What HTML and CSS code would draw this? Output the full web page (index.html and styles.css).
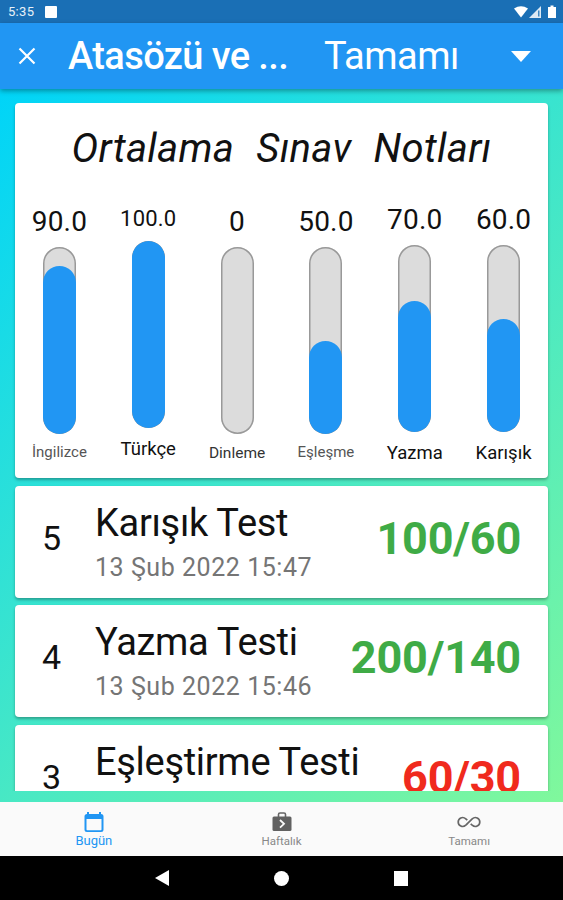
FILE: index.html
```html
<!DOCTYPE html>
<html lang="tr">
<head>
  <meta charset="UTF-8" />
  <title>Ortalama Sınav Notları</title>
  <meta name="viewport" content="width=device-width, initial-scale=1.0"/>
  <link rel="stylesheet" href="styles.css">
</head>
<body>

<div class="status-bar">
  <span class="clock">5:35</span>
  <span class="status-square"></span>
  <svg class="status-icons" width="44" height="14" viewBox="0 0 44 14" fill="#fff">
    <path d="M1 3.5Q8 -1 15 3.5L8 12.5Z"/>
    <path d="M28 1V13H16Z" fill-opacity=".85"/>
    <path d="M25.2 5.5h1.2v6h-1.2z" fill="#1a6fb5"/>
    <path d="M35 2h2.500V.5h3V2h2.500v11h-8z"/>
  </svg>
</div>

<header class="app-bar">
  <svg class="close" width="18" height="18" viewBox="0 0 18 18">
    <path d="M1.5 1.5L16.5 16.5M16.5 1.5L1.5 16.5" stroke="#fff" stroke-width="2.2"/>
  </svg>
  <h1>Atasözü ve ...</h1>
  <div class="dropdown">
    <span>Tamamı</span>
    <svg width="20" height="11" viewBox="0 0 20 11"><path d="M0 0H20L10 11Z" fill="#fff"/></svg>
  </div>
</header>

<main class="content">
  <div class="list">
    <section class="card chart-card">
      <h2>Ortalama Sınav Notları</h2>
      <div class="chart">
        <div class="col">
          <span class="value">90.0</span>
          <div class="track"><div class="fill" style="height:90%"></div></div>
          <span class="label label-xs">İngilizce</span>
        </div>
        <div class="col">
          <span class="value value-sm">100.0</span>
          <div class="track"><div class="fill" style="height:100%"></div></div>
          <span class="label">Türkçe</span>
        </div>
        <div class="col">
          <span class="value">0</span>
          <div class="track"></div>
          <span class="label label-sm">Dinleme</span>
        </div>
        <div class="col">
          <span class="value">50.0</span>
          <div class="track"><div class="fill" style="height:50%"></div></div>
          <span class="label label-xs">Eşleşme</span>
        </div>
        <div class="col">
          <span class="value">70.0</span>
          <div class="track"><div class="fill" style="height:70%"></div></div>
          <span class="label">Yazma</span>
        </div>
        <div class="col">
          <span class="value">60.0</span>
          <div class="track"><div class="fill" style="height:60%"></div></div>
          <span class="label">Karışık</span>
        </div>
      </div>
    </section>

    <section class="card test">
      <span class="number">5</span>
      <div class="info">
        <h3>Karışık Test</h3>
        <p>13 Şub 2022 15:47</p>
      </div>
      <span class="score">100/60</span>
    </section>

    <section class="card test">
      <span class="number">4</span>
      <div class="info">
        <h3>Yazma Testi</h3>
        <p>13 Şub 2022 15:46</p>
      </div>
      <span class="score">200/140</span>
    </section>

    <section class="card test">
      <span class="number">3</span>
      <div class="info">
        <h3>Eşleştirme Testi</h3>
      </div>
      <span class="score fail">60/30</span>
    </section>
  </div>
</main>

<nav class="tabs">
  <a class="tab active">
    <svg width="20" height="22" viewBox="0 0 20 22">
      <path d="M3 1h2v2h10V1h2v2q2.500 0 2.500 2.500v13q0 2.500-2.500 2.500H3q-2.500 0-2.500-2.500v-13Q.5 3 3 3ZM2.500 8v10.500q0 .7.700.7h13.600q.7 0 .7-.7V8Z" fill="#2196f3" fill-rule="evenodd"/>
    </svg>
    <span>Bugün</span>
  </a>
  <a class="tab">
    <svg width="20" height="22" viewBox="0 0 20 22">
      <path d="M6.500 6V3.500q0-1.500 1.500-1.500h4q1.500 0 1.500 1.500V6" fill="none" stroke="#666" stroke-width="1.600"/>
      <rect x=".5" y="5.500" width="19" height="14.500" rx="1.500" fill="#616161"/>
      <path d="M8 9l4 3.800L8 16.600" fill="none" stroke="#fafafa" stroke-width="1.800"/>
    </svg>
    <span>Haftalık</span>
  </a>
  <a class="tab">
    <svg width="24" height="22" viewBox="0 0 24 22">
      <path d="M10.300 12.800L8.800 14.200C5.600 17 1.200 14.800 1.200 11S5.600 5 8.800 7.800L10.300 9.200M13.700 12.800L15.200 14.200C18.400 17 22.800 14.800 22.800 11S18.400 5 15.200 7.800L8.800 14.200" fill="none" stroke="#666" stroke-width="1.700"/>
    </svg>
    <span>Tamamı</span>
  </a>
</nav>

<footer class="system-nav">
  <svg width="14" height="16" viewBox="0 0 14 16"><path d="M14 0V16L0 8Z" fill="#fff"/></svg>
  <span class="home"></span>
  <span class="recent"></span>
</footer>

</body>
</html>
```

FILE: styles.css
```css
* {
  margin: 0;
  padding: 0;
  box-sizing: border-box;
}

body {
  width: 563px;
  height: 900px;
  display: flex;
  flex-direction: column;
  overflow: hidden;
  font-family: Roboto, sans-serif;
  color: #111;
}

.status-bar {
  height: 23px;
  flex: none;
  display: flex;
  align-items: center;
  padding: 0 6px 0 8px;
  background: #1a6fb5;
  color: #e8f1f8;
}

.clock {
  font-size: 13px;
  letter-spacing: 0.3px;
}

.status-square {
  width: 12px;
  height: 12px;
  margin-left: 11px;
  background: #fff;
  border-radius: 1px;
}

.status-icons {
  margin-left: auto;
}

.app-bar {
  height: 66px;
  flex: none;
  display: flex;
  align-items: center;
  padding: 0 32px 0 18px;
  background: #2196f3;
  color: #fff;
  box-shadow: 0 2px 5px rgba(0, 0, 0, 0.35);
  z-index: 1;
}

.app-bar h1 {
  width: 256px;
  margin-left: 32px;
  font-size: 38px;
  font-weight: 500;
  letter-spacing: -0.6px;
  white-space: nowrap;
}

.dropdown {
  flex: 1;
  display: flex;
  align-items: center;
  justify-content: space-between;
  font-size: 38px;
  letter-spacing: -0.5px;
}

.content {
  height: 713px;
  flex: none;
  padding: 14px 15px 11px;
  background: linear-gradient(135deg, #00d4f8 0%, #80f89c 100%);
}

.list {
  height: 688px;
  margin: 0 -15px;
  padding: 0 15px;
  overflow: hidden;
}

.card {
  background: #fff;
  border-radius: 4px;
  margin-bottom: 7.7px;
  box-shadow: 0 2px 3px rgba(0, 0, 0, 0.3);
}

.chart-card {
  height: 375px;
  padding-top: 16px;
}

.chart-card h2 {
  height: 56px;
  line-height: 60px;
  text-align: center;
  font-size: 40px;
  font-style: italic;
  font-weight: 400;
  letter-spacing: 0.3px;
  word-spacing: 12px;
  white-space: nowrap;
}

.chart {
  height: 315px;
  display: grid;
  grid-template-columns: repeat(6, 1fr);
}

.col {
  display: flex;
  flex-direction: column;
  align-items: center;
  justify-content: center;
  gap: 9px;
}

.value {
  font-size: 28px;
  line-height: 33px;
  letter-spacing: 0.2px;
}

.value-sm {
  font-size: 22px;
  line-height: 26px;
}

.track {
  width: 33px;
  height: 187px;
  flex: none;
  display: flex;
  align-items: flex-end;
  background: #dcdcdc;
  border-radius: 17px;
  box-shadow: inset 0 0 0 1.5px #999;
  overflow: hidden;
}

.fill {
  width: 100%;
  background: #2196f3;
  border-radius: 17px;
}

.label {
  font-size: 18.5px;
  line-height: 24px;
  margin-bottom: -2px;
}

.label-sm {
  font-size: 15.5px;
  line-height: 20px;
  color: #333;
}

.label-xs {
  font-size: 15px;
  line-height: 19px;
  color: #555;
}

.test {
  height: 112px;
  display: flex;
  align-items: flex-start;
  padding: 0 27px;
}

.number {
  width: 53px;
  padding-top: 32px;
  font-size: 34px;
  line-height: 40px;
}

.info {
  padding-top: 15px;
}

.info h3 {
  font-size: 38px;
  line-height: 45px;
  font-weight: 400;
  letter-spacing: -0.3px;
}

.info p {
  margin-top: 7px;
  font-size: 25px;
  line-height: 30px;
  letter-spacing: 0.55px;
  color: #757575;
}

.score {
  margin-left: auto;
  padding-top: 25px;
  font-size: 45px;
  line-height: 56px;
  font-weight: 700;
  letter-spacing: -0.2px;
  color: #3fab46;
}

.score.fail {
  color: #f02a1d;
}

.tabs {
  height: 54px;
  flex: none;
  display: flex;
  background: #fafafa;
}

.tab {
  flex: 1;
  display: flex;
  flex-direction: column;
  align-items: center;
  padding-top: 9px;
  font-size: 11.5px;
  line-height: 17px;
  color: #888;
}

.tab.active {
  font-size: 13px;
  line-height: 15px;
  color: #2196f3;
}

.system-nav {
  height: 44px;
  flex: none;
  display: flex;
  align-items: center;
  padding-left: 155px;
  background: #000;
}

.home {
  width: 15px;
  height: 15px;
  margin-left: 105px;
  border-radius: 50%;
  background: #fff;
}

.recent {
  width: 14px;
  height: 15px;
  margin-left: 105px;
  background: #fff;
}
```
